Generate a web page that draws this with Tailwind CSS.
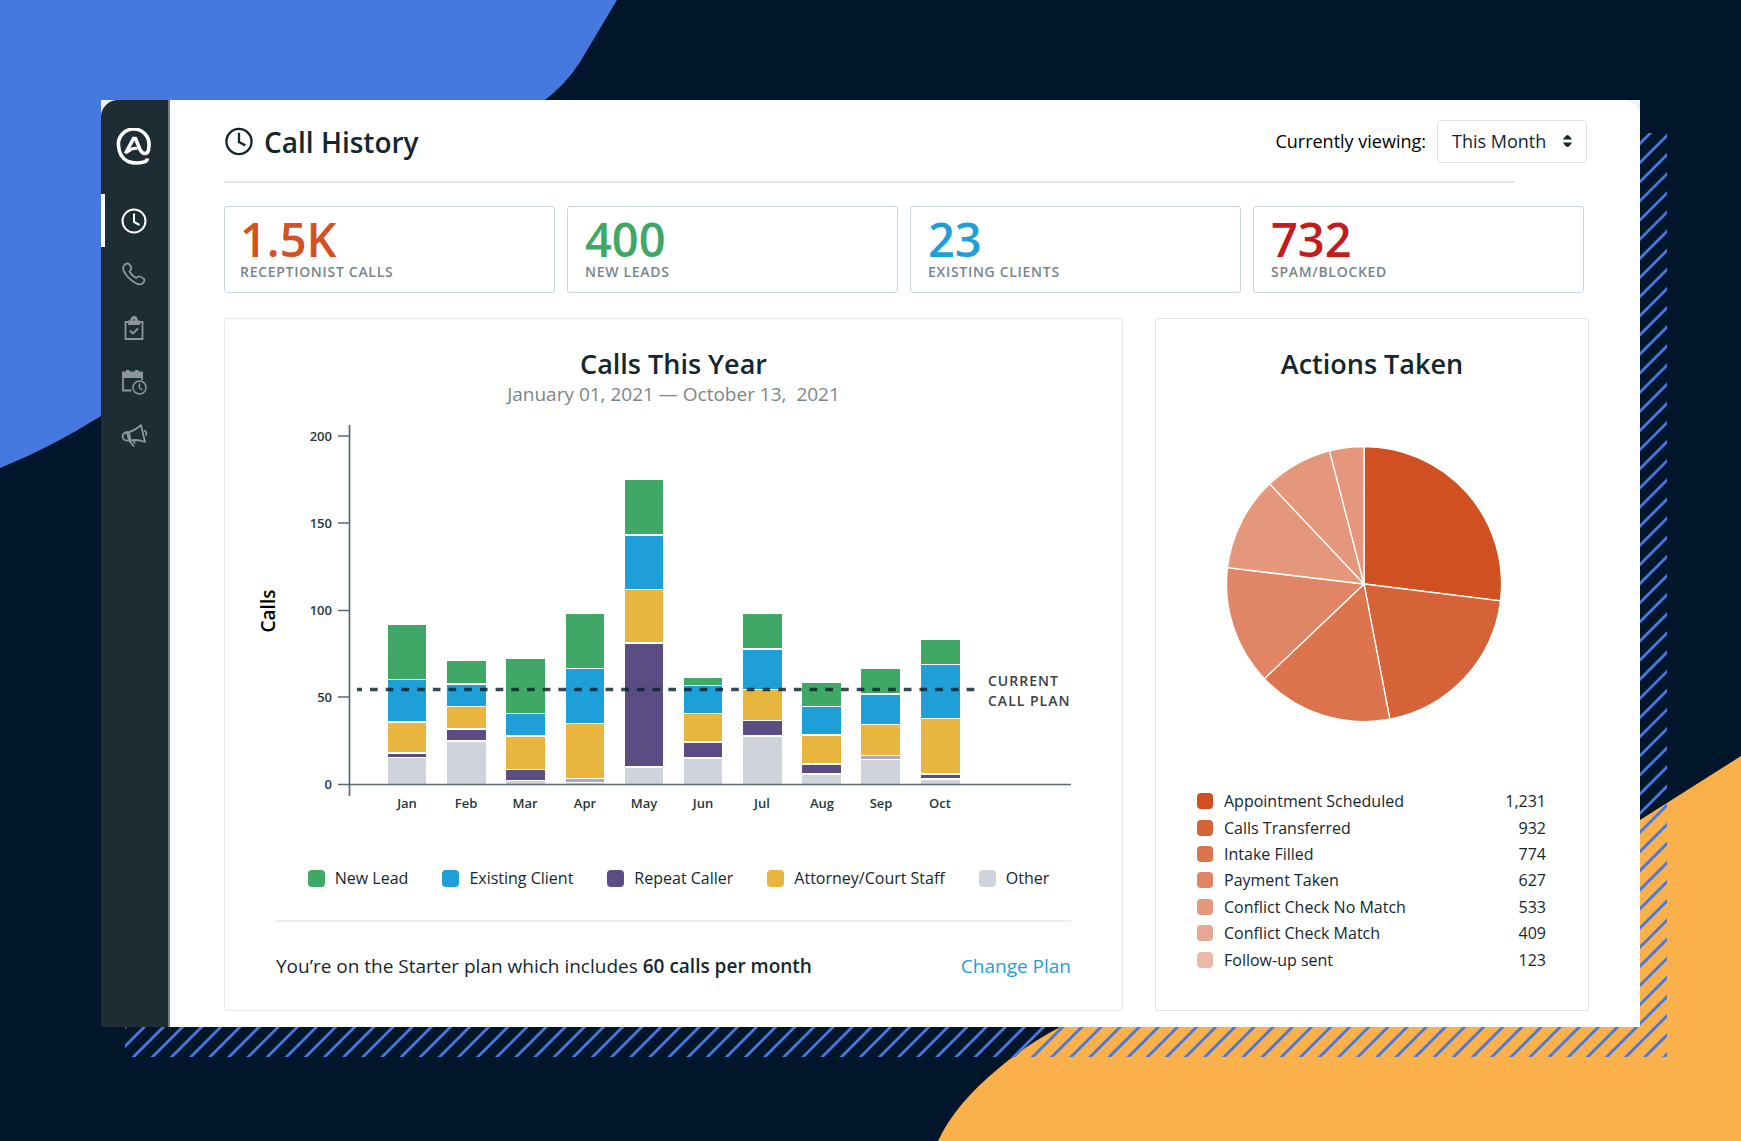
<!DOCTYPE html>
<html lang="en">
<head>
<meta charset="utf-8">
<meta name="viewport" content="width=device-width, initial-scale=1">
<title>Call History</title>
<script src="https://cdn.jsdelivr.net/npm/@tailwindcss/browser@4"></script>
</head>
<body class="relative min-h-screen overflow-x-hidden bg-[#01162a] px-[101px] pt-[100px] pb-[114px] font-['Open_Sans',sans-serif] text-[#14272e]">

<!-- Background shapes -->
<svg class="absolute top-0 left-0" width="640" height="480" viewBox="0 0 640 480" aria-hidden="true"><path fill="#4679e0" d="M0 0H617L580 62Q566 84 545 100L300 300L101 416Q50 448 0 468Z"/></svg>
<svg class="absolute right-0 bottom-0" width="820" height="400" viewBox="0 0 820 400" aria-hidden="true"><path fill="#fab04b" d="M820 15L719 79L400 200L139 286Q102 306 78 327Q34 363 17 400H820Z"/></svg>

<div class="relative">
  <!-- Hatched shadow -->
  <div class="absolute top-[33px] -right-[27px] -bottom-[30px] left-[24px]" aria-hidden="true">
    <svg class="size-full">
      <path transform="rotate(45)" d="M0 0H4000" stroke="#4679e0" stroke-width="6000" stroke-dasharray="2.800 10.730" stroke-dashoffset="-8.400"/>
    </svg>
  </div>

  <div class="relative flex bg-[#eff1f1]">
    <!-- Sidebar -->
    <aside class="w-[69px] shrink-0 rounded-tl-[17px] border-r-2 border-[#737d80] bg-[#1e2d33]">
      <a href="#" aria-label="Home" class="flex h-[94px] items-center justify-center pr-0.5 text-white">
        <svg width="36" height="38" viewBox="0 0 36 38" fill="none" stroke="currentColor"><path stroke-width="3.600" d="M31.500 30.500Q31 33.500 27 34.200Q19 36 12 33.500Q3 29 2.500 17.500A15.300 15 0 1 1 33 17Q33 25.500 29 25.500Q26 25.500 24 21.500L19.500 10.500H17.500L9.500 25.500"/><path stroke-width="3" d="M11.500 24Q16 19.500 21.500 20.500"/></svg>
      </a>
      <nav class="flex flex-col text-[#8d9698]">
        <a href="#" aria-label="Call history" class="flex h-[53px] items-center justify-center border-l-4 border-white pr-[6px] text-white">
          <svg width="26" height="26" viewBox="0 0 26 26" fill="none" stroke="currentColor" stroke-width="2"><circle cx="13" cy="13" r="11.500"/><path d="M13 5.500V14L18.500 17"/></svg>
        </a>
        <a href="#" aria-label="Phone" class="flex h-[54px] items-center justify-center pr-0.5">
          <svg width="26" height="26" viewBox="0 0 26 26" fill="none" stroke="currentColor" stroke-width="1.800" stroke-linejoin="round"><path d="M3 4.500Q5.500 1.500 8 3Q11 6 10 8.500L8.500 10.500Q10.500 14.500 15 17L17.500 15.500Q19.500 15 23 18Q24.500 19.500 21.500 22.500Q18.500 25 12 20.500Q5 15.500 2.500 9Q1.800 6 3 4.500Z"/></svg>
        </a>
        <a href="#" aria-label="Tasks" class="flex h-[54px] items-center justify-center pr-0.5">
          <svg width="26" height="26" viewBox="0 0 26 26" fill="none" stroke="currentColor" stroke-width="1.800"><path d="M8 7H4.500V24H21.500V7H18"/><path fill="currentColor" d="M8 9V6.500H10Q10 2 13 2T16 6.500H18V9Z"/><path stroke="#1e2d33" stroke-width="1" d="M12 5H14"/><path d="M9 15.500L12 18.500L17 13.500"/></svg>
        </a>
        <a href="#" aria-label="Schedule" class="flex h-[54px] items-center justify-center pr-0.5">
          <svg width="28" height="26" viewBox="0 0 28 26" fill="none" stroke="currentColor"><path stroke="none" fill="currentColor" d="M2 2.500H6V1H9.500V2.500H15V1H18.500V2.500H23V9H2Z"/><path stroke-width="1.800" d="M3 8V21.500H11.500M22 8V11"/><circle cx="19.500" cy="18.500" r="6.500" stroke-width="1.500"/><path stroke-width="1.500" d="M19.500 14.500V19L22.500 21"/></svg>
        </a>
        <a href="#" aria-label="Announcements" class="flex h-[54px] items-center justify-center pr-0.5">
          <svg width="28" height="26" viewBox="0 0 28 26" fill="none" stroke="currentColor" stroke-width="1.800" stroke-linejoin="round"><path d="M9 9Q15 7.500 21 2L25 19Q17 16 10.500 17.500ZM9 9Q3 9 2.500 13.500Q3 18.500 10.500 17.500M7 9.500L9 17.500M24 7.500Q27.500 9 26 12.500M9.500 18L14 23.500M13.500 18L15 20.500"/></svg>
        </a>
      </nav>
    </aside>

    <!-- Content -->
    <main class="min-w-0 flex-1 rounded-tr-[16px] bg-white pt-5 pr-[51px] pb-4 pl-[54px]">
      <header class="flex h-[43px] items-center justify-between pr-[2px]">
        <h1 class="flex items-center gap-[11px] text-[28px] leading-9 font-semibold">
          <svg width="29" height="29" viewBox="0 0 30 30" fill="none" stroke="currentColor" stroke-width="2.400" aria-hidden="true"><circle cx="15.500" cy="15" r="13"/><path d="M15.500 6V15.500L22 19"/></svg>
          Call History
        </h1>
        <div class="flex items-center gap-[11px]">
          <label for="period" class="text-[18px] text-black">Currently viewing:</label>
          <div class="relative">
            <select id="period" class="h-[43px] w-[150px] appearance-none rounded border border-[#dfe2e2] bg-white pl-[14px] text-[18px] text-[#14272e]"><option>This Month</option></select>
            <svg class="pointer-events-none absolute top-[15px] right-[14px]" width="11" height="12" viewBox="0 0 11 13" fill="currentColor" aria-hidden="true"><path d="M5.500 0Q7 0 10.500 5H.5Q4 0 5.500 0ZM5.500 13Q7 13 10.500 8H.5Q4 13 5.500 13Z"/></svg>
          </div>
        </div>
      </header>
      <div class="mt-[18px] mr-[75px] h-[2px] bg-[#e1e5e6]"></div>

      <section class="mt-[23px] mr-[5px] grid grid-cols-4 gap-3" aria-label="Totals">
        <div class="h-[87px] rounded-[3px] border border-[#cbd5dd] px-[15px] pt-2">
          <p class="text-[47px] leading-[49px] font-semibold text-[#d35224]">1.5K</p>
          <p class="text-[14px] leading-4 font-semibold tracking-wider text-[#78858a]">RECEPTIONIST CALLS</p>
        </div>
        <div class="h-[87px] rounded-[3px] border border-[#cbd5dd] px-[17px] pt-2">
          <p class="text-[47px] leading-[49px] font-semibold text-[#40a867]">400</p>
          <p class="text-[14px] leading-4 font-semibold tracking-wider text-[#78858a]">NEW LEADS</p>
        </div>
        <div class="h-[87px] rounded-[3px] border border-[#cbd5dd] px-[17px] pt-2">
          <p class="text-[47px] leading-[49px] font-semibold text-[#1f9fd8]">23</p>
          <p class="text-[14px] leading-4 font-semibold tracking-wider text-[#78858a]">EXISTING CLIENTS</p>
        </div>
        <div class="h-[87px] rounded-[3px] border border-[#cbd5dd] px-[17px] pt-2">
          <p class="text-[47px] leading-[49px] font-semibold text-[#c41c1c]">732</p>
          <p class="text-[14px] leading-4 font-semibold tracking-wider text-[#78858a]">SPAM/BLOCKED</p>
        </div>
      </section>

      <div class="mt-[25px] flex gap-8">
        <!-- Calls this year -->
        <section class="min-w-0 flex-1 rounded-[3px] border border-[#e6e8e9] pt-[27px] pb-[30px]">
          <h2 class="text-center text-[27px] leading-9 font-semibold">Calls This Year</h2>
          <p class="text-center text-[19px] leading-6 text-[#7b8689]">January 01, 2021 — October 13,&nbsp; 2021</p>
          <div class="mt-[14px] pr-8 pl-[33px]">
            <svg class="block h-auto w-full overflow-visible" viewBox="0 0 832 400" role="img" aria-label="Calls per month, stacked by caller type">
              <text transform="rotate(-90)" x="-191" y="17" text-anchor="middle" font-size="19" font-weight="600" fill="#000">Calls</text>
              <g font-size="13" font-weight="600" text-anchor="end" fill="#26373d">
                <text x="74" y="21">200</text><text x="74" y="108">150</text><text x="74" y="195">100</text><text x="74" y="282">50</text><text x="74" y="369">0</text>
              </g>
              <g fill="#40a867">
                <path d="M130 205h38v54h-38zM189 241h39v22h-39zM248 239h39v54h-39zM308 194h38v54h-38zM367 60h38v54h-38zM426 258h38v7h-38zM485 194h39v34h-39zM544 263h39v23h-39zM603 249h39v24h-39zM663 220h39v24h-39z"/>
              </g>
              <g fill="#1f9fd8">
                <path d="M130 260h38v41h-38zM189 265h39v21h-39zM248 294h39v21h-39zM308 249h38v54h-38zM367 116h38v53h-38zM426 266h38v27h-38zM485 230h39v39h-39zM544 287h39v27h-39zM603 275h39v29h-39zM663 245h39v53h-39z"/>
              </g>
              <g fill="#e8b63f">
                <path d="M130 303h38v29h-38zM189 287h39v21h-39zM248 317h39v32h-39zM308 304h38v54h-38zM367 170h38v52h-38zM426 294h38v27h-38zM485 270h39v30h-39zM544 316h39v27h-39zM603 305h39v30h-39zM663 299h39v54h-39z"/>
              </g>
              <g fill="#5b4c84">
                <path d="M130 334h38v3h-38zM189 310h39v10h-39zM248 350h39v10h-39zM367 224h38v122h-38zM426 323h38v14h-38zM485 301h39v14h-39zM544 345h39v8h-39zM663 355h39v3h-39z"/>
                <path opacity=".5" d="M308 359h38v3h-38zM603 336h39v3h-39z"/>
              </g>
              <g fill="#cfd3db">
                <path d="M130 338h38v26h-38zM189 322h39v42h-39zM248 361h39v3h-39zM308 363h38v1h-38zM367 348h38v16h-38zM426 339h38v25h-38zM485 317h39v47h-39zM544 355h39v9h-39zM603 340h39v24h-39zM663 360h39v4h-39z"/>
              </g>
              <path d="M99 269.500H717" stroke="#0b222c" stroke-opacity=".82" stroke-width="3.400" stroke-dasharray="7.700 8" stroke-dashoffset="2.700"/>
              <path d="M91.500 5V376M80 16H92M80 103H92M80 190.500H92M80 277H92M80 364.500H813" stroke="#5b6a71" stroke-width="1.700" fill="none"/>
              <g font-size="13" font-weight="600" text-anchor="middle" fill="#26373d">
                <text x="149" y="388">Jan</text><text x="208" y="388">Feb</text><text x="267" y="388">Mar</text><text x="327" y="388">Apr</text><text x="386" y="388">May</text><text x="445" y="388">Jun</text><text x="504" y="388">Jul</text><text x="564" y="388">Aug</text><text x="623" y="388">Sep</text><text x="682" y="388">Oct</text>
              </g>
              <g class="tracking-[1px]" font-size="14" font-weight="600" fill="#3d4142"><text x="730" y="266">CURRENT</text><text x="730" y="286">CALL PLAN</text></g>
            </svg>
          </div>
          <ul class="mt-[46px] flex justify-center gap-[34px] pl-[10px] text-[16px] leading-6">
            <li class="flex items-center gap-[10px]"><span class="size-[17px] rounded bg-[#40a867]"></span>New Lead</li>
            <li class="flex items-center gap-[10px]"><span class="size-[17px] rounded bg-[#1f9fd8]"></span>Existing Client</li>
            <li class="flex items-center gap-[10px]"><span class="size-[17px] rounded bg-[#5b4c84]"></span>Repeat Caller</li>
            <li class="flex items-center gap-[10px]"><span class="size-[17px] rounded bg-[#e8b63f]"></span>Attorney/Court Staff</li>
            <li class="flex items-center gap-[10px]"><span class="size-[17px] rounded bg-[#cfd3db]"></span>Other</li>
          </ul>
          <div class="mx-[51px] mt-[30px] flex justify-between border-t-2 border-[#eceeee] pt-[30px] text-[19px] leading-7">
            <p>You’re on the Starter plan which includes <strong class="font-semibold">60 calls per month</strong></p>
            <a href="#" class="text-[#1f9fd8]">Change Plan</a>
          </div>
        </section>

        <!-- Actions taken -->
        <section class="w-[434px] shrink-0 rounded-[3px] border border-[#e1e4e5] pt-[27px]">
          <h2 class="text-center text-[27px] leading-9 font-semibold">Actions Taken</h2>
          <svg class="mt-16 ml-[70px] block" width="276" height="276" viewBox="-138 -138 276 276" role="img" aria-label="Share of each action">
            <g stroke="#fff" stroke-width="1.300">
              <path fill="#d05022" d="M0 0V-137.500A137.500 137.500 0 0 1 136.500 16.800Z"/>
              <path fill="#d66238" d="M0 0L136.500 16.800A137.500 137.500 0 0 1 25.800 135.100Z"/>
              <path fill="#dc744e" d="M0 0L25.800 135.100A137.500 137.500 0 0 1 -99.700 94.700Z"/>
              <path fill="#e08666" d="M0 0L-99.700 94.700A137.500 137.500 0 0 1 -136.500 -16.300Z"/>
              <path fill="#e4977b" d="M0 0L-136.500 -16.300A137.500 137.500 0 0 1 -94.300 -100.100Z"/>
              <path fill="#e4977b" d="M0 0L-94.300 -100.100A137.500 137.500 0 0 1 -34.400 -133.100Z"/>
              <path fill="#e4977b" d="M0 0L-34.400 -133.100A137.500 137.500 0 0 1 0 -137.500Z"/>
            </g>
          </svg>
          <table class="mt-[66px] mr-[44px] ml-[41px] h-[185px] w-[349px] text-[16px] leading-6">
            <tbody>
              <tr><td class="w-[27px] p-0"><span class="block size-4 rounded bg-[#d05022]"></span></td><th scope="row" class="p-0 text-left font-normal">Appointment Scheduled</th><td class="p-0 text-right">1,231</td></tr>
              <tr><td class="p-0"><span class="block size-4 rounded bg-[#d66238]"></span></td><th scope="row" class="p-0 text-left font-normal">Calls Transferred</th><td class="p-0 text-right">932</td></tr>
              <tr><td class="p-0"><span class="block size-4 rounded bg-[#dc744e]"></span></td><th scope="row" class="p-0 text-left font-normal">Intake Filled</th><td class="p-0 text-right">774</td></tr>
              <tr><td class="p-0"><span class="block size-4 rounded bg-[#e08666]"></span></td><th scope="row" class="p-0 text-left font-normal">Payment Taken</th><td class="p-0 text-right">627</td></tr>
              <tr><td class="p-0"><span class="block size-4 rounded bg-[#e4977b]"></span></td><th scope="row" class="p-0 text-left font-normal">Conflict Check No Match</th><td class="p-0 text-right">533</td></tr>
              <tr><td class="p-0"><span class="block size-4 rounded bg-[#e8a891]"></span></td><th scope="row" class="p-0 text-left font-normal">Conflict Check Match</th><td class="p-0 text-right">409</td></tr>
              <tr><td class="p-0"><span class="block size-4 rounded bg-[#ecb9a8]"></span></td><th scope="row" class="p-0 text-left font-normal">Follow-up sent</th><td class="p-0 text-right">123</td></tr>
            </tbody>
          </table>
        </section>
      </div>
    </main>
  </div>
</div>
</body>
</html>
